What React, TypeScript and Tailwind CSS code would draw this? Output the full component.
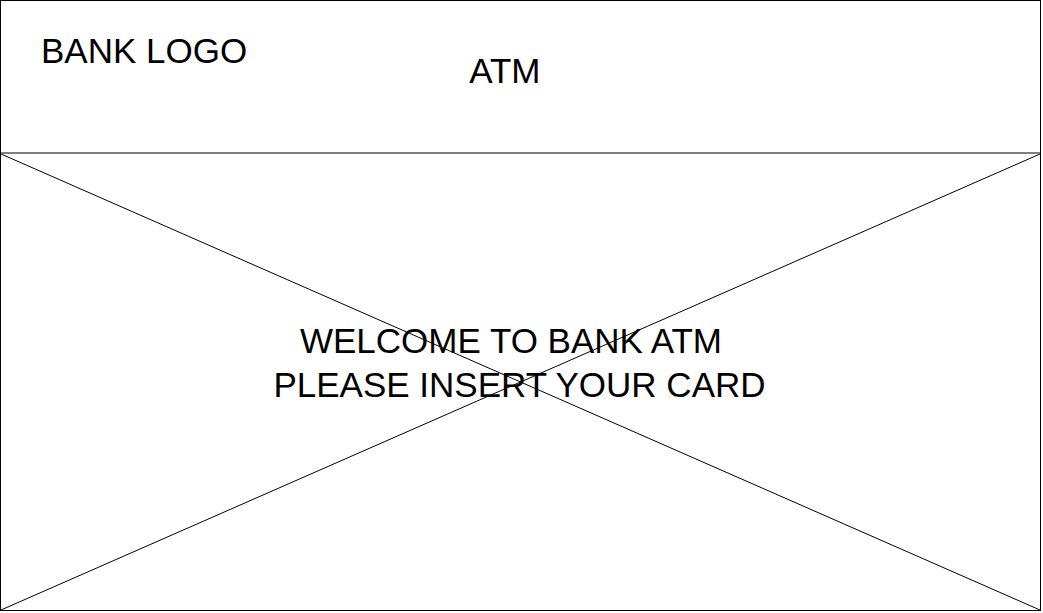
export default function App() {
  return (
    <div className="w-[1041px] h-[611px] border border-black bg-white flex flex-col text-black font-['Liberation_Sans',Arial,sans-serif]">
      {/* header */}
      <div className="h-[151px] flex items-start shrink-0">
        <span className="ml-[40px] mt-[32px] text-[35px] leading-[35px] whitespace-nowrap">BANK LOGO</span>
        <span className="ml-[222px] mt-[52px] text-[35px] leading-[35px] whitespace-nowrap">ATM</span>
      </div>
      <div className="h-[2px] bg-[#808080] shrink-0" />
      {/* image placeholder */}
      <div className="relative flex-1">
        <svg className="absolute inset-0 w-full h-full" viewBox="0 0 100 100" preserveAspectRatio="none">
          <line x1="0" y1="0" x2="100" y2="100" stroke="#000" strokeWidth="1" vectorEffect="non-scaling-stroke" />
          <line x1="100" y1="0" x2="0" y2="100" stroke="#000" strokeWidth="1" vectorEffect="non-scaling-stroke" />
        </svg>
        <div className="relative pt-[165px] text-center text-[35px] leading-[44px]">
          <div className="pr-[19px]">WELCOME TO BANK ATM</div>
          <div className="pr-[2px]">PLEASE INSERT YOUR CARD</div>
        </div>
      </div>
    </div>
  )
}
